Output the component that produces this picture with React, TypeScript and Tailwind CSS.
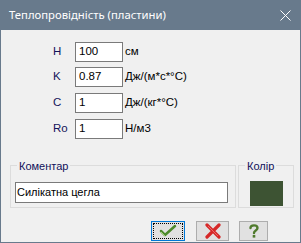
import React from 'react';

const rows = [
  { label: 'H', value: '100', unit: 'см' },
  { label: 'K', value: '0.87', unit: 'Дж/(м*с*°С)' },
  { label: 'C', value: '1', unit: 'Дж/(кг*°С)' },
  { label: 'Ro', value: '1', unit: 'Н/м3' },
];

const CheckIcon = () => (
  <svg width="18" height="14" viewBox="0 0 18 14">
    <path d="M2 7 L6 11 L16 2" fill="none" stroke="#4c8a2c" strokeWidth="2.5" strokeLinecap="round" strokeLinejoin="round" />
    <path d="M2 8 L6 12" fill="none" stroke="#a8d07c" strokeWidth="1" />
  </svg>
);

const CrossIcon = () => (
  <svg width="18" height="16" viewBox="0 0 18 16">
    <path d="M3 2 L15 14 M15 2 L3 14" fill="none" stroke="#d62828" strokeWidth="3.2" strokeLinecap="round" />
    <path d="M4 3 L14 13" fill="none" stroke="#f07a7a" strokeWidth="0.8" />
  </svg>
);

const HelpIcon = () => (
  <svg width="12" height="16" viewBox="0 0 12 16">
    <path d="M2.5 5 C2.5 1.5 9.5 1.5 9.5 5 C9.5 7.5 6 7.5 6 10" fill="none" stroke="#4f7a2c" strokeWidth="2.4" strokeLinecap="round" />
    <rect x="4.7" y="12" width="2.6" height="2.6" fill="#4f7a2c" />
  </svg>
);

export default function App() {
  return (
    <div className="w-[301px] h-[243px] bg-[#687a8c] px-px pb-px flex flex-col font-['Liberation_Sans',Arial,sans-serif] text-[11.5px] text-black">
      <div className="h-[30px] shrink-0 flex items-center justify-between pl-[8px] pr-[9px]">
        <span className="text-[11.3px] text-white font-['Noto_Sans',sans-serif]">Теплопровідність (пластини)</span>
        <svg width="11" height="11" viewBox="0 0 11 11">
          <path d="M0.5 0.5 L10.5 10.5 M10.5 0.5 L0.5 10.5" stroke="#ffffff" strokeWidth="1" />
        </svg>
      </div>
      <div className="flex-1 bg-[#f0f0f0] flex flex-col">
        <div className="flex flex-col pt-[12px] pl-[52px]">
          {rows.map((r, i) => (
            <div key={r.label} className={`flex items-center h-[20px] ${i === 0 ? '' : i === 1 ? 'mt-[5px]' : 'mt-[6px]'}`}>
              <span className="w-[22px] text-[#14145a]">{r.label}</span>
              <div className="w-[48px] h-[20px] bg-white border border-[#7a7a7a] flex items-center pl-[3px]">
                {r.value}
              </div>
              <span className="ml-[2px]">{r.unit}</span>
            </div>
          ))}
        </div>
        <div className="flex mt-[26px] pl-[9px] gap-[2px] text-[11px]">
          <div className="relative w-[226px] h-[43px] border border-[#dcdcdc] pt-[16px] pl-[4px]">
            <span className="absolute -top-[8px] left-[6px] bg-[#f0f0f0] px-[2px] text-[#10105a]">Коментар</span>
            <div className="w-[213px] h-[21px] bg-white border border-[#7a7a7a] flex items-center pl-[1px]">
              Силікатна цегла
            </div>
          </div>
          <div className="relative w-[56px] h-[43px] border border-[#dcdcdc] pt-[15px] pl-[11px]">
            <span className="absolute -top-[8px] left-[6px] bg-[#f0f0f0] px-[2px] text-[#10105a]">Колір</span>
            <div className="w-[33px] h-[25px] bg-[#3d5333]" />
          </div>
        </div>
        <div className="flex mt-[13px] pl-[150px]">
          <button type="button" className="w-[34px] h-[20px] bg-[#e1e1e1] border border-[#0078d7] flex items-center justify-center p-px">
            <div className="w-full h-full border border-dotted border-black flex items-center justify-center">
              <CheckIcon />
            </div>
          </button>
          <button type="button" className="ml-[11px] w-[33px] h-[20px] bg-[#e1e1e1] border border-[#adadad] flex items-center justify-center">
            <CrossIcon />
          </button>
          <button type="button" className="ml-[10px] w-[29px] h-[20px] bg-[#e1e1e1] border border-[#adadad] flex items-center justify-center">
            <HelpIcon />
          </button>
        </div>
      </div>
    </div>
  );
}
